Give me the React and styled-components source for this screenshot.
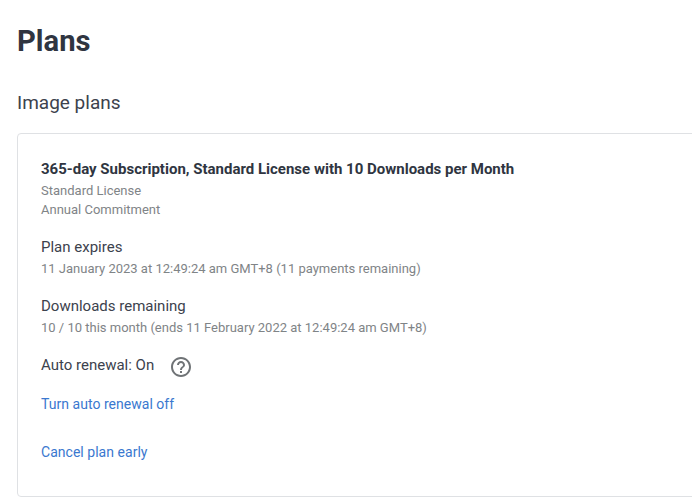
import React from "react";
import styled, { createGlobalStyle } from "styled-components";

const GlobalStyle = createGlobalStyle`
  * {
    margin: 0;
    padding: 0;
    box-sizing: border-box;
  }

  body {
    font-family: "Roboto", sans-serif;
    background: #ffffff;
    color: #2f3541;
    overflow: hidden;
  }
`;

const Page = styled.main`
  width: 720px;
  padding: 21px 0 0 17px;
`;

const Title = styled.h1`
  font-size: 29.2px;
  line-height: 40px;
  font-weight: 700;
`;

const SectionTitle = styled.h2`
  margin-top: 30px;
  font-size: 19px;
  line-height: 24px;
  font-weight: 400;
  color: #3c424d;
`;

const PlanCard = styled.section`
  margin-top: 18px;
  height: 364px;
  padding: 24px 23px;
  border: 1px solid #dfe1e4;
  border-radius: 4px;
`;

const PlanName = styled.h3`
  font-size: 15px;
  line-height: 22px;
  font-weight: 700;
`;

const Group = styled.div`
  margin-top: ${({ $gap }) => $gap}px;
`;

const Label = styled.p`
  font-size: 15px;
  line-height: 22px;
  color: #3c424d;
`;

const Detail = styled.p`
  font-size: 13px;
  line-height: 19px;
  color: #7f8487;
`;

const RenewalRow = styled.div`
  display: flex;
  align-items: flex-start;
  gap: 15px;
  height: 24px;
  margin-top: 17px;
`;

const HelpIcon = styled.svg`
  width: 24px;
  height: 24px;
  margin-top: 0.5px;
  fill: #6f7376;
`;

const Actions = styled.div`
  display: flex;
  flex-direction: column;
  align-items: flex-start;
  gap: 28px;
  margin-top: 16px;
`;

const ActionLink = styled.a`
  font-size: 14px;
  line-height: 20px;
  letter-spacing: 0.03px;
  color: #3a78cf;
  text-decoration: none;
  cursor: pointer;
`;

const usage = [
  {
    label: "Plan expires",
    detail: "11 January 2023 at 12:49:24 am GMT+8 (11 payments remaining)",
  },
  {
    label: "Downloads remaining",
    detail: "10 / 10 this month (ends 11 February 2022 at 12:49:24 am GMT+8)",
  },
];

const App = () => {
  return (
    <>
      <GlobalStyle />
      <Page>
        <Title>Plans</Title>
        <SectionTitle>Image plans</SectionTitle>
        <PlanCard>
          <PlanName>365-day Subscription, Standard License with 10 Downloads per Month</PlanName>
          <Group $gap={1}>
            <Detail>Standard License</Detail>
            <Detail>Annual Commitment</Detail>
          </Group>
          {usage.map((item) => (
            <Group key={item.label} $gap={17}>
              <Label>{item.label}</Label>
              <Group $gap={1}>
                <Detail>{item.detail}</Detail>
              </Group>
            </Group>
          ))}
          <RenewalRow>
            <Label>Auto renewal: On</Label>
            <HelpIcon viewBox="0 0 24 24" aria-label="Help">
              <path d="M11 18h2v-2h-2v2zm1-16C6.48 2 2 6.48 2 12s4.48 10 10 10 10-4.48 10-10S17.52 2 12 2zm0 18c-4.41 0-8-3.59-8-8s3.59-8 8-8 8 3.59 8 8-3.59 8-8 8zm0-14c-2.21 0-4 1.79-4 4h2c0-1.1.9-2 2-2s2 .9 2 2c0 2-3 1.75-3 5h2c0-2.25 3-2.5 3-5 0-2.21-1.79-4-4-4z" />
            </HelpIcon>
          </RenewalRow>
          <Actions>
            <ActionLink>Turn auto renewal off</ActionLink>
            <ActionLink>Cancel plan early</ActionLink>
          </Actions>
        </PlanCard>
      </Page>
    </>
  );
};

export default App;
